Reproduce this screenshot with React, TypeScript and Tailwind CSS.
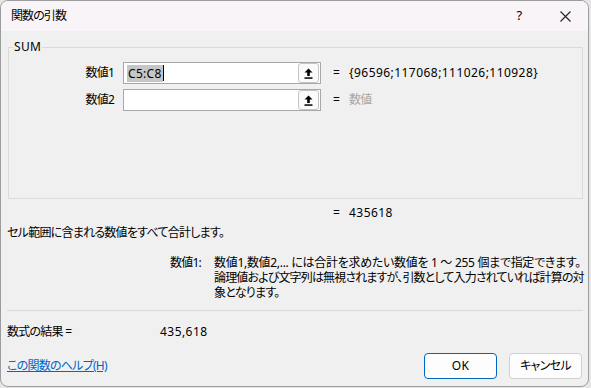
import React from 'react';

const font = { fontFamily: '"Noto Sans", "Noto Sans CJK JP", sans-serif' };

const RefButton: React.FC = () => (
    <div className="w-[21px] h-[20px] mr-[1px] flex items-center justify-center bg-[#fafafa] border border-[#c4c4c4] rounded-[3px]">
        <svg width="9" height="11" viewBox="0 0 9 11">
            <path d="M4.5 0.5 L8.5 4.5 L5.8 4.5 L5.8 8 L3.2 8 L3.2 4.5 L0.5 4.5 Z" fill="#000" />
            <rect x="0.5" y="9.3" width="8" height="1.5" fill="#000" />
        </svg>
    </div>
);

interface ArgRowProps {
    label: string;
    value?: string;
    result: string;
    muted?: boolean;
    focused?: boolean;
}

const ArgRow: React.FC<ArgRowProps> = ({ label, value, result, muted, focused }) => (
    <div className="flex items-center h-[22px]">
        <div className="w-[106px] text-right pr-[1px]">{label}</div>
        <div className="ml-[8px] w-[198px] h-[22px] flex items-center bg-white border border-[#a8a8a8]">
            <div className="flex-1 flex items-center pl-[3px]">
                {value && (
                    <span className="bg-[#c6c6c6] px-[1px] leading-[17px] tracking-[0.3px]">{value}</span>
                )}
                {focused && <span className="w-[1px] h-[16px] bg-black" />}
            </div>
            <RefButton />
        </div>
        <div className="ml-[12px] w-[16px]">=</div>
        <div className={muted ? 'text-[#a6a6a6]' : 'text-black tracking-[0.45px]'}>{result}</div>
    </div>
);

export default function App() {
    return (
        <div className="w-[591px] h-[388px] bg-[#e6e6e6] text-[12px] text-black tracking-[-0.75px] [font-feature-settings:'palt']" style={font}>
            <div className="w-[589px] h-[387px] rounded-lg border border-[#9c9c9c] bg-[#f0f0f0] overflow-hidden flex flex-col">

                {/* Title bar */}
                <div className="h-[30px] shrink-0 bg-[#f9f4f7] flex items-center pl-[10px]">
                    <span className="flex-1 tracking-[-0.9px]">関数の引数</span>
                    <span className="w-[46px] text-center text-[13px]">?</span>
                    <span className="w-[46px] flex justify-center">
                        <svg width="11" height="11" viewBox="0 0 11 11">
                            <path d="M0.5 0.5 L10.5 10.5 M10.5 0.5 L0.5 10.5" stroke="#222" strokeWidth="1.1" />
                        </svg>
                    </span>
                </div>

                <div className="flex-1 flex flex-col px-[6px]">
                    {/* Argument group */}
                    <fieldset className="mt-[8px] ml-[1px] w-[575px] h-[160px] border border-[#dadada] px-0">
                        <legend className="ml-[4px] px-[1px] leading-[16px] tracking-[0.3px]">SUM</legend>
                        <div className="flex flex-col gap-[5px] mt-[7px]">
                            <ArgRow label="数値1" value="C5:C8" focused result="{96596;117068;111026;110928}" />
                            <ArgRow label="数値2" result="数値" muted />
                        </div>
                    </fieldset>

                    {/* Result of function */}
                    <div className="flex mt-[6px] leading-[16px]">
                        <div className="w-[326px]" />
                        <div className="w-[16px]">=</div>
                        <div className="tracking-[0.45px]">435618</div>
                    </div>

                    <div className="mt-[4px] leading-[16px]">セル範囲に含まれる数値をすべて合計します。</div>

                    {/* Argument description */}
                    <div className="flex mt-[14px] leading-[15px]">
                        <div className="w-[163px] shrink-0" />
                        <div className="w-[44px] shrink-0">数値1:</div>
                        <div className="flex flex-col whitespace-nowrap">
                            <span className="tracking-[-0.3px]">数値1,数値2,... には合計を求めたい数値を 1 ～ 255 個まで指定できます。</span>
                            <span className="tracking-[-0.85px]">論理値および文字列は無視されますが、引数として入力されていれば計算の対</span>
                            <span>象となります。</span>
                        </div>
                    </div>

                    <div className="mt-[10px] h-[1px] w-[576px] bg-[#d9d9d9]" />

                    {/* Formula result */}
                    <div className="flex mt-[13px] leading-[16px]">
                        <div className="w-[153px]">数式の結果 =</div>
                        <div className="tracking-[0.45px]">435,618</div>
                    </div>

                    {/* Footer */}
                    <div className="flex items-center mt-[13px]">
                        <a className="flex-1 text-[#0066cc] underline leading-[16px]">この関数のヘルプ(H)</a>
                        <button className="w-[73px] h-[26px] rounded-[4px] border border-[#0067c0] bg-[#fdfdfd] tracking-[0.3px]">OK</button>
                        <button className="ml-[12px] w-[73px] h-[26px] rounded-[4px] border border-[#d0d0d0] bg-[#fdfdfd]">キャンセル</button>
                    </div>
                </div>
            </div>
        </div>
    );
}
